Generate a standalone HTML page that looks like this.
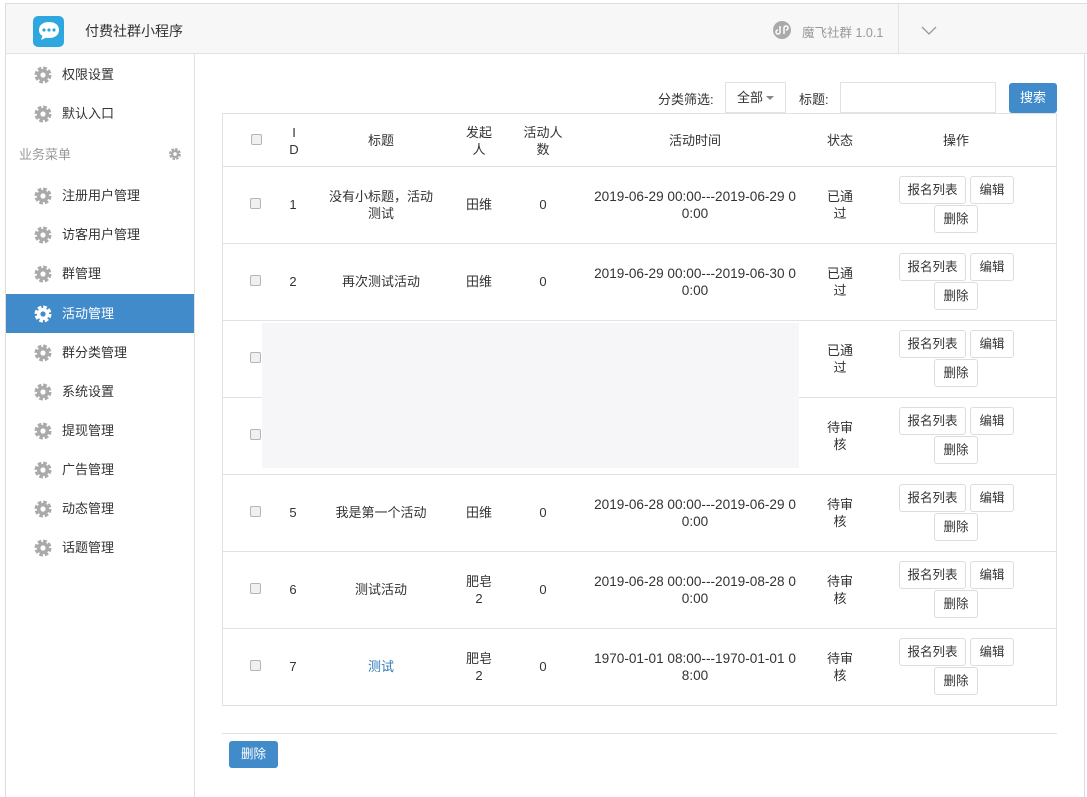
<!DOCTYPE html>
<html><head><meta charset="utf-8"><style>
*{box-sizing:border-box;margin:0;padding:0}
body{width:1087px;height:797px;background:#fff;font-family:"Liberation Sans","Noto Sans CJK SC",sans-serif;font-size:13px;color:#333;position:relative;overflow:hidden}
.abs{position:absolute}
.hdr{left:5px;top:3px;width:1082px;height:51px;background:#f7f7f7;border-top:1px solid #ddd;border-bottom:1px solid #e2e2e2;border-left:1px solid #ddd}
.side{left:5px;top:54px;width:190px;height:743px;border-right:1px solid #e2e2e2;border-left:1px solid #ddd}
.item{position:absolute;left:0;width:188px;height:39px;line-height:39px;padding-left:56px;font-size:13px;color:#333}
.item svg{position:absolute;left:27px;top:10px}
.item.act{background:#428bca;color:#fff}
.tbl{left:222px;top:113px;width:835px;height:593px;border:1px solid #e2e2e2}
.c{position:absolute;text-align:center;line-height:17px;font-size:13px}
.t{font-size:13.6px}
.cb{position:absolute;width:11px;height:11px;border:1px solid #b5b5b5;border-radius:2px;background:#f0f0f0;left:28px}
.btn{position:absolute;height:28px;line-height:26px;border:1px solid #ddd;border-radius:3px;background:#fff;font-size:12.5px;text-align:center;color:#333}
</style></head><body>
<div class="abs hdr">
  <svg class="abs" style="left:27px;top:12px" width="31" height="31" viewBox="0 0 31 31"><rect width="31" height="31" rx="5" fill="#2ea7e0"/><path d="M6 14c0-5 4-8 10-8s10 3 10 8-4 8-10 8c-1 0-2 0-3-.3L8 24l1.5-4C7 18.5 6 16.5 6 14z" fill="#fff"/><circle cx="11" cy="14" r="1.6" fill="#2ea7e0"/><circle cx="16" cy="14" r="1.6" fill="#2ea7e0"/><circle cx="21" cy="14" r="1.6" fill="#2ea7e0"/></svg>
  <div class="abs" style="left:79px;top:17px;font-size:14px;color:#333">付费社群小程序</div>
  <svg class="abs" style="left:767px;top:17px" width="18" height="18" viewBox="0 0 18 18"><circle cx="9" cy="9" r="9" fill="#aaa"/><path d="M7 5v6a2 2 0 1 1-2-2M11 13V7a2 2 0 1 1 2 2" stroke="#fff" stroke-width="1.5" fill="none"/></svg>
  <div class="abs" style="left:796px;top:18px;font-size:12.5px;color:#999">魔飞社群 1.0.1</div>
  <div class="abs" style="left:892px;top:0;width:1px;height:50px;background:#e2e2e2"></div>
  <svg class="abs" style="left:915px;top:22px" width="16" height="10" viewBox="0 0 16 10"><path d="M1 1l7 7 7-7" stroke="#999" stroke-width="1.3" fill="none"/></svg>
</div>
<div class="abs" style="left:1084px;top:54px;width:1px;height:743px;background:#ddd"></div>
<div class="abs side">
<svg width="0" height="0" style="position:absolute"><defs><g id="g"><circle cx="10" cy="10" r="6.5" fill="none" stroke="currentColor" stroke-width="4" stroke-dasharray="3.4 1.7"/><circle cx="10" cy="10" r="6" fill="currentColor"/><circle cx="10" cy="10" r="2.6" fill="#fff"/></g></defs></svg>
<div class="item" style="top:1px;color:#333"><svg width="20" height="20" style="color:#aaa"><use href="#g"/></svg>权限设置</div>
<div class="item" style="top:40px"><svg width="20" height="20" style="color:#aaa"><use href="#g"/></svg>默认入口</div>
<div class="item" style="top:81px;padding-left:13px;color:#999">业务菜单<svg width="14" height="14" viewBox="0 0 20 20" style="left:162px;top:12px;color:#aaa"><use href="#g"/></svg></div>
<div class="item" style="top:122px"><svg width="20" height="20" style="color:#aaa"><use href="#g"/></svg>注册用户管理</div>
<div class="item" style="top:161px"><svg width="20" height="20" style="color:#aaa"><use href="#g"/></svg>访客用户管理</div>
<div class="item" style="top:200px"><svg width="20" height="20" style="color:#aaa"><use href="#g"/></svg>群管理</div>
<div class="item act" style="top:240px"><svg width="20" height="20" style="color:#fff"><circle cx="10" cy="10" r="6.5" fill="none" stroke="#fff" stroke-width="4" stroke-dasharray="3.4 1.7"/><circle cx="10" cy="10" r="6" fill="#fff"/><circle cx="10" cy="10" r="2.6" fill="#428bca"/></svg>活动管理</div>
<div class="item" style="top:279px"><svg width="20" height="20" style="color:#aaa"><use href="#g"/></svg>群分类管理</div>
<div class="item" style="top:318px"><svg width="20" height="20" style="color:#aaa"><use href="#g"/></svg>系统设置</div>
<div class="item" style="top:357px"><svg width="20" height="20" style="color:#aaa"><use href="#g"/></svg>提现管理</div>
<div class="item" style="top:396px"><svg width="20" height="20" style="color:#aaa"><use href="#g"/></svg>广告管理</div>
<div class="item" style="top:435px"><svg width="20" height="20" style="color:#aaa"><use href="#g"/></svg>动态管理</div>
<div class="item" style="top:474px"><svg width="20" height="20" style="color:#aaa"><use href="#g"/></svg>话题管理</div>
</div>

<div class="abs" style="left:658px;top:89px">分类筛选:</div>
<div class="abs" style="left:725px;top:82px;width:61px;height:31px;border:1px solid #e2e2e2;line-height:29px;padding-left:11px">全部<span style="position:absolute;left:40px;top:13px;border:4px solid transparent;border-top:4px solid #888"></span></div>
<div class="abs" style="left:799px;top:89px">标题:</div>
<div class="abs" style="left:840px;top:82px;width:156px;height:31px;border:1px solid #e2e2e2"></div>
<div class="abs" style="left:1009px;top:83px;width:48px;height:30px;background:#428bca;border-radius:3px;color:#fff;text-align:center;line-height:30px">搜索</div>

<div class="abs tbl">
  <div class="cb" style="top:20px"></div>
  <div class="c" style="left:60px;width:22px;top:10px">I<br>D</div>
  <div class="c" style="left:128px;width:60px;top:18px">标题</div>
  <div class="c" style="left:236px;width:40px;top:10px">发起<br>人</div>
  <div class="c" style="left:292px;width:56px;top:10px">活动人<br>数</div>
  <div class="c" style="left:422px;width:100px;top:18px">活动时间</div>
  <div class="c" style="left:597px;width:40px;top:18px">状态</div>
  <div class="c" style="left:703px;width:60px;top:18px">操作</div>
  <div class="abs" style="left:39px;top:209px;width:537px;height:145px;background:#f6f6f8;z-index:2"></div>
</div>
<div id="rows"></div>
<div class="abs" style="left:222px;top:733px;width:835px;height:1px;background:#e2e2e2"></div>
<div class="abs" style="left:229px;top:741px;width:49px;height:27px;background:#428bca;border-radius:3px;color:#fff;text-align:center;line-height:27px;font-size:12.5px">删除</div>
<script>
var d=[["1","没有小标题，活动<br>测试","田维","0","2019-06-29 00:00---2019-06-29 0<br>0:00","已通<br>过"],
["2","再次测试活动","田维","0","2019-06-29 00:00---2019-06-30 0<br>0:00","已通<br>过"],
["","","","","","已通<br>过"],["","","","","","待审<br>核"],
["5","我是第一个活动","田维","0","2019-06-28 00:00---2019-06-29 0<br>0:00","待审<br>核"],
["6","测试活动","肥皂<br>2","0","2019-06-28 00:00---2019-08-28 0<br>0:00","待审<br>核"],
["7","<span style='color:#337ab7'>测试</span>","肥皂<br>2","0","1970-01-01 08:00---1970-01-01 0<br>8:00","待审<br>核"]];
var h="";
d.forEach(function(r,i){var t=166+77*i;
function c(x,w,txt,cl){var two=txt.indexOf("<br>")>=0;return '<div class="c abs '+(cl||'')+'" style="left:'+x+'px;width:'+w+'px;top:'+(t+(two?22:30))+'px">'+txt+'</div>';}
h+='<div class="abs" style="left:223px;top:'+t+'px;width:833px;height:1px;background:#e2e2e2"></div>';
h+='<div class="cb abs" style="left:250px;top:'+(t+32)+'px"></div>';
h+=c(273,40,r[0])+c(321,120,r[1])+c(459,40,r[2])+c(523,40,r[3])+c(575,240,r[4],'t')+c(820,40,r[5]);
h+='<div class="btn" style="left:899px;top:'+(t+10)+'px;width:67px">报名列表</div><div class="btn" style="left:970px;top:'+(t+10)+'px;width:44px">编辑</div><div class="btn" style="left:934px;top:'+(t+39)+'px;width:44px">删除</div>';
});
document.getElementById("rows").innerHTML=h;
</script>
</body></html>
